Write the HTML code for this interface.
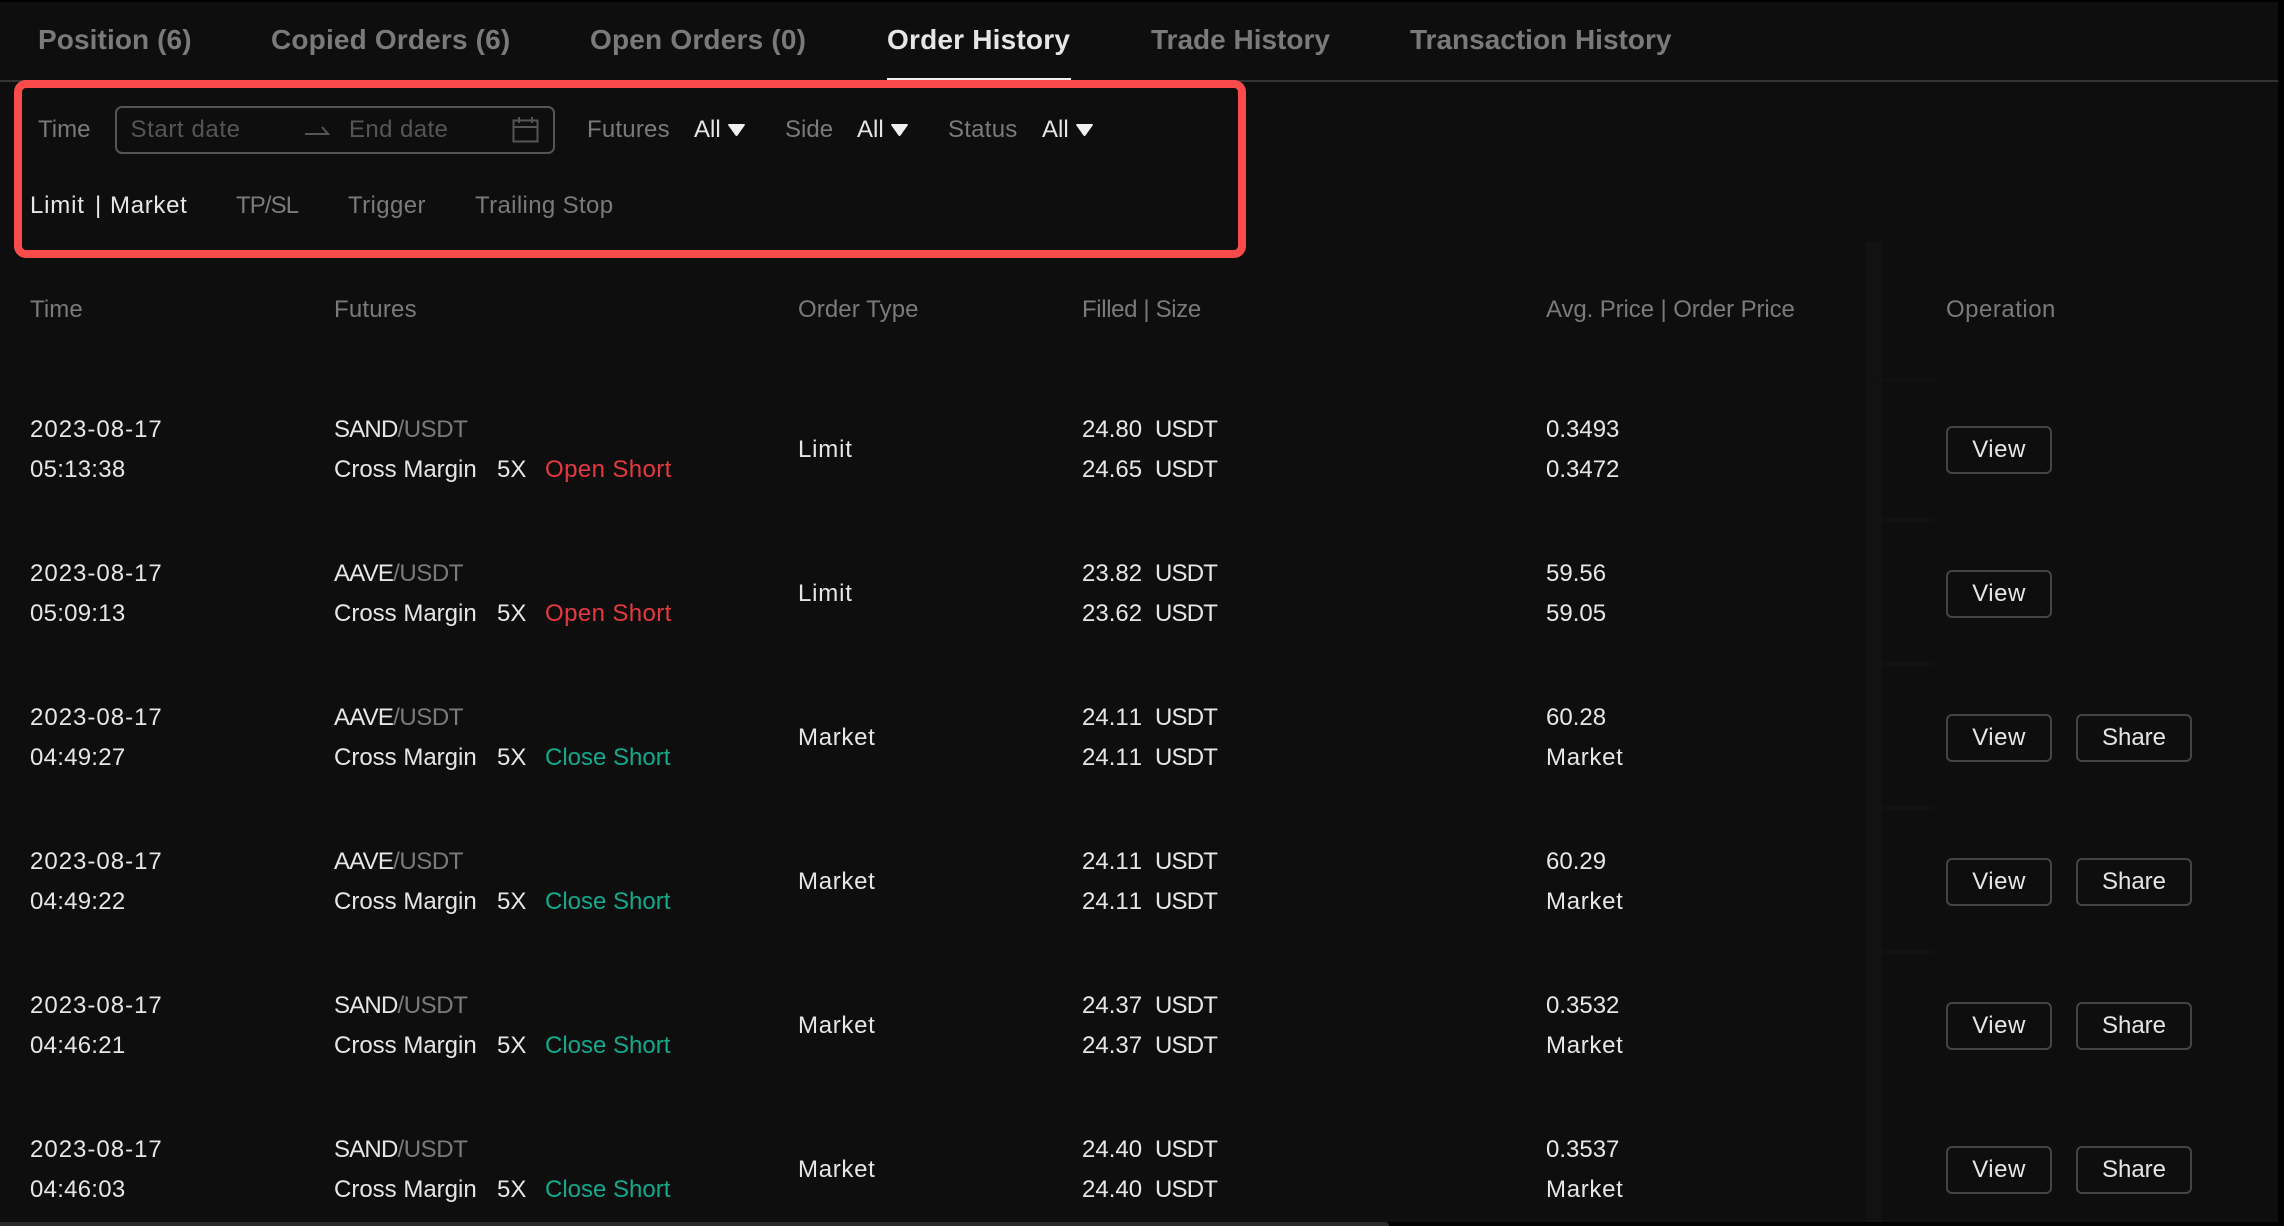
<!DOCTYPE html>
<html lang="en"><head><meta charset="utf-8"><title>Order History</title>
<style>
*{box-sizing:border-box;margin:0;padding:0}
html,body{width:2284px;height:1226px;overflow:hidden;background:#000}
body{font-family:"Liberation Sans",sans-serif;font-size:24px;color:#e6e6e6;position:relative}
#bg{position:absolute;left:0;top:2px;width:2278px;height:1220px;background:#0e0e0e;overflow:hidden}
#page{position:absolute;left:0;top:0;width:2284px;height:1226px}
.t{position:absolute;white-space:nowrap;line-height:40px;height:40px;margin-top:1px}
.tab{font-size:28px;font-weight:bold;color:#7a7a7a;top:19px}
.m{color:#7a7a7a}
.d{color:#555}
.w{color:#e6e6e6}
.car{position:absolute;top:123px}
.r{position:absolute;left:0;width:2278px;height:80px}
.c1{left:30px}.c2{left:334px}.c3{left:798px}.c4{left:1082px}.c5{left:1155px;letter-spacing:-.8px}.c6{left:1546px}
.l1{top:0}.l2{top:40px}.mid{top:20px}
.date{letter-spacing:1px;font-kerning:none}
.tm{letter-spacing:.25px;font-kerning:none}
.c4,.n{font-kerning:none}
.x{left:497px}.s{left:545px}
.sym{letter-spacing:-.8px}
.sl{letter-spacing:-.4px}
.red{color:#e5393f;letter-spacing:.4px}.grn{color:#14a98c}
.mk{letter-spacing:.7px}.lm{letter-spacing:.8px}
.b{position:absolute;top:17px;height:48px;border:2px solid #444;border-radius:6px;text-align:center;line-height:44px;color:#e6e6e6}
.v{left:1946px;width:106px;letter-spacing:.5px}.sh{left:2076px;width:116px}
</style></head><body>
<div id="bg">
<div style="position:absolute;left:1866px;top:240px;width:16px;height:980px;background:#121212"></div>
<div style="position:absolute;left:1870px;top:376px;width:64px;height:4px;background:#111"></div>
<div style="position:absolute;left:1870px;top:516px;width:64px;height:4px;background:#111"></div>
<div style="position:absolute;left:1870px;top:660px;width:64px;height:4px;background:#111"></div>
<div style="position:absolute;left:1870px;top:804px;width:64px;height:4px;background:#111"></div>
<div style="position:absolute;left:1870px;top:948px;width:64px;height:4px;background:#111"></div>
</div>
<div id="page">
<div style="position:absolute;left:0;top:80px;width:2278px;height:2px;background:#333"></div>
<div style="position:absolute;left:887px;top:78px;width:184px;height:2px;background:#f0f0f0"></div>
<span class="t tab" style="left:38px;letter-spacing:.1px">Position (6)</span>
<span class="t tab" style="left:271px;letter-spacing:.17px">Copied Orders (6)</span>
<span class="t tab" style="left:590px;letter-spacing:.2px">Open Orders (0)</span>
<span class="t tab" style="left:887px;color:#e6e6e6;letter-spacing:.2px">Order History</span>
<span class="t tab" style="left:1151px">Trade History</span>
<span class="t tab" style="left:1410px">Transaction History</span>

<div style="position:absolute;left:14px;top:80px;width:1232px;height:178px;border:8px solid #fa4b4b;border-radius:12px"></div>

<span class="t m" style="left:38px;top:109px">Time</span>
<div style="position:absolute;left:115px;top:106px;width:440px;height:48px;border:2px solid #555;border-radius:7px"></div>
<span class="t d" style="left:130.500px;top:109px;letter-spacing:.6px">Start date</span>
<svg style="position:absolute;left:304px;top:124px" width="26" height="12" viewBox="0 0 26 12" fill="none" stroke="#555" stroke-width="2"><path d="M1 10H24L18 3"/></svg>
<span class="t d" style="left:349px;top:109px;letter-spacing:.4px">End date</span>
<svg style="position:absolute;left:512px;top:116px" width="27" height="27" viewBox="0 0 27 27" fill="none" stroke="#555" stroke-width="2"><path d="M1.500 4.500H25.500V25.500H1.500ZM1.500 11H25.500M7 1V7M20 1V7"/></svg>

<span class="t m" style="left:587px;top:109px;letter-spacing:.2px">Futures</span>
<span class="t w" style="left:694px;top:109px">All</span>
<svg class="car" style="left:727px" width="19" height="14" viewBox="0 0 19 14"><path d="M2 1H17Q18.500 1 17.600 2.500L10.500 12.500Q9.500 13.500 8.500 12.500L1.400 2.500Q.5 1 2 1Z" fill="#f0f0f0"/></svg>
<span class="t m" style="left:785px;top:109px">Side</span>
<span class="t w" style="left:857px;top:109px">All</span>
<svg class="car" style="left:890px" width="19" height="14" viewBox="0 0 19 14"><path d="M2 1H17Q18.500 1 17.600 2.500L10.500 12.500Q9.500 13.500 8.500 12.500L1.400 2.500Q.5 1 2 1Z" fill="#f0f0f0"/></svg>
<span class="t m" style="left:948px;top:109px;letter-spacing:.25px">Status</span>
<span class="t w" style="left:1042px;top:109px">All</span>
<svg class="car" style="left:1075px" width="19" height="14" viewBox="0 0 19 14"><path d="M2 1H17Q18.500 1 17.600 2.500L10.500 12.500Q9.500 13.500 8.500 12.500L1.400 2.500Q.5 1 2 1Z" fill="#f0f0f0"/></svg>

<span class="t w lm" style="left:30px;top:185px">Limit</span>
<span class="t w" style="left:95px;top:185px">|</span>
<span class="t w mk" style="left:110px;top:185px">Market</span>
<span class="t m" style="left:236px;top:185px;letter-spacing:-.9px">TP/SL</span>
<span class="t m" style="left:348px;top:185px;letter-spacing:.4px">Trigger</span>
<span class="t m" style="left:475px;top:185px;letter-spacing:.35px">Trailing Stop</span>

<span class="t m c1" style="top:289px;letter-spacing:.1px">Time</span>
<span class="t m c2" style="top:289px;letter-spacing:.2px">Futures</span>
<span class="t m c3" style="top:289px;letter-spacing:.1px">Order Type</span>
<span class="t m" style="left:1082px;top:289px;letter-spacing:-.37px">Filled | Size</span>
<span class="t m c6" style="top:289px;letter-spacing:-.1px">Avg. Price | Order Price</span>
<span class="t m" style="left:1946px;top:289px;letter-spacing:.5px">Operation</span>

<div class="r" style="top:409px">
<span class="t c1 l1 date">2023-08-17</span><span class="t c1 l2 tm">05:13:38</span>
<span class="t c2 l1"><span class="sym">SAND</span><span class="m sl">/USDT</span></span><span class="t c2 l2">Cross Margin</span><span class="t x l2">5X</span><span class="t s l2 red">Open Short</span>
<span class="t c3 mid lm">Limit</span>
<span class="t c4 l1">24.80</span><span class="t c5 l1">USDT</span><span class="t c4 l2">24.65</span><span class="t c5 l2">USDT</span>
<span class="t c6 l1 n">0.3493</span><span class="t c6 l2 n">0.3472</span>
<div class="b v">View</div>
</div>

<div class="r" style="top:553px">
<span class="t c1 l1 date">2023-08-17</span><span class="t c1 l2 tm">05:09:13</span>
<span class="t c2 l1"><span class="sym">AAVE</span><span class="m sl">/USDT</span></span><span class="t c2 l2">Cross Margin</span><span class="t x l2">5X</span><span class="t s l2 red">Open Short</span>
<span class="t c3 mid lm">Limit</span>
<span class="t c4 l1">23.82</span><span class="t c5 l1">USDT</span><span class="t c4 l2">23.62</span><span class="t c5 l2">USDT</span>
<span class="t c6 l1 n">59.56</span><span class="t c6 l2 n">59.05</span>
<div class="b v">View</div>
</div>

<div class="r" style="top:697px">
<span class="t c1 l1 date">2023-08-17</span><span class="t c1 l2 tm">04:49:27</span>
<span class="t c2 l1"><span class="sym">AAVE</span><span class="m sl">/USDT</span></span><span class="t c2 l2">Cross Margin</span><span class="t x l2">5X</span><span class="t s l2 grn">Close Short</span>
<span class="t c3 mid mk">Market</span>
<span class="t c4 l1">24.11</span><span class="t c5 l1">USDT</span><span class="t c4 l2">24.11</span><span class="t c5 l2">USDT</span>
<span class="t c6 l1 n">60.28</span><span class="t c6 l2 mk">Market</span>
<div class="b v">View</div><div class="b sh">Share</div>
</div>

<div class="r" style="top:841px">
<span class="t c1 l1 date">2023-08-17</span><span class="t c1 l2 tm">04:49:22</span>
<span class="t c2 l1"><span class="sym">AAVE</span><span class="m sl">/USDT</span></span><span class="t c2 l2">Cross Margin</span><span class="t x l2">5X</span><span class="t s l2 grn">Close Short</span>
<span class="t c3 mid mk">Market</span>
<span class="t c4 l1">24.11</span><span class="t c5 l1">USDT</span><span class="t c4 l2">24.11</span><span class="t c5 l2">USDT</span>
<span class="t c6 l1 n">60.29</span><span class="t c6 l2 mk">Market</span>
<div class="b v">View</div><div class="b sh">Share</div>
</div>

<div class="r" style="top:985px">
<span class="t c1 l1 date">2023-08-17</span><span class="t c1 l2 tm">04:46:21</span>
<span class="t c2 l1"><span class="sym">SAND</span><span class="m sl">/USDT</span></span><span class="t c2 l2">Cross Margin</span><span class="t x l2">5X</span><span class="t s l2 grn">Close Short</span>
<span class="t c3 mid mk">Market</span>
<span class="t c4 l1">24.37</span><span class="t c5 l1">USDT</span><span class="t c4 l2">24.37</span><span class="t c5 l2">USDT</span>
<span class="t c6 l1 n">0.3532</span><span class="t c6 l2 mk">Market</span>
<div class="b v">View</div><div class="b sh">Share</div>
</div>

<div class="r" style="top:1129px">
<span class="t c1 l1 date">2023-08-17</span><span class="t c1 l2 tm">04:46:03</span>
<span class="t c2 l1"><span class="sym">SAND</span><span class="m sl">/USDT</span></span><span class="t c2 l2">Cross Margin</span><span class="t x l2">5X</span><span class="t s l2 grn">Close Short</span>
<span class="t c3 mid mk">Market</span>
<span class="t c4 l1">24.40</span><span class="t c5 l1">USDT</span><span class="t c4 l2">24.40</span><span class="t c5 l2">USDT</span>
<span class="t c6 l1 n">0.3537</span><span class="t c6 l2 mk">Market</span>
<div class="b v">View</div><div class="b sh">Share</div>
</div>

<div style="position:absolute;left:0;top:1222px;width:1389px;height:4px;background:#2a2a2a;border-radius:0 4px 0 0"></div>
</div>
</body></html>
